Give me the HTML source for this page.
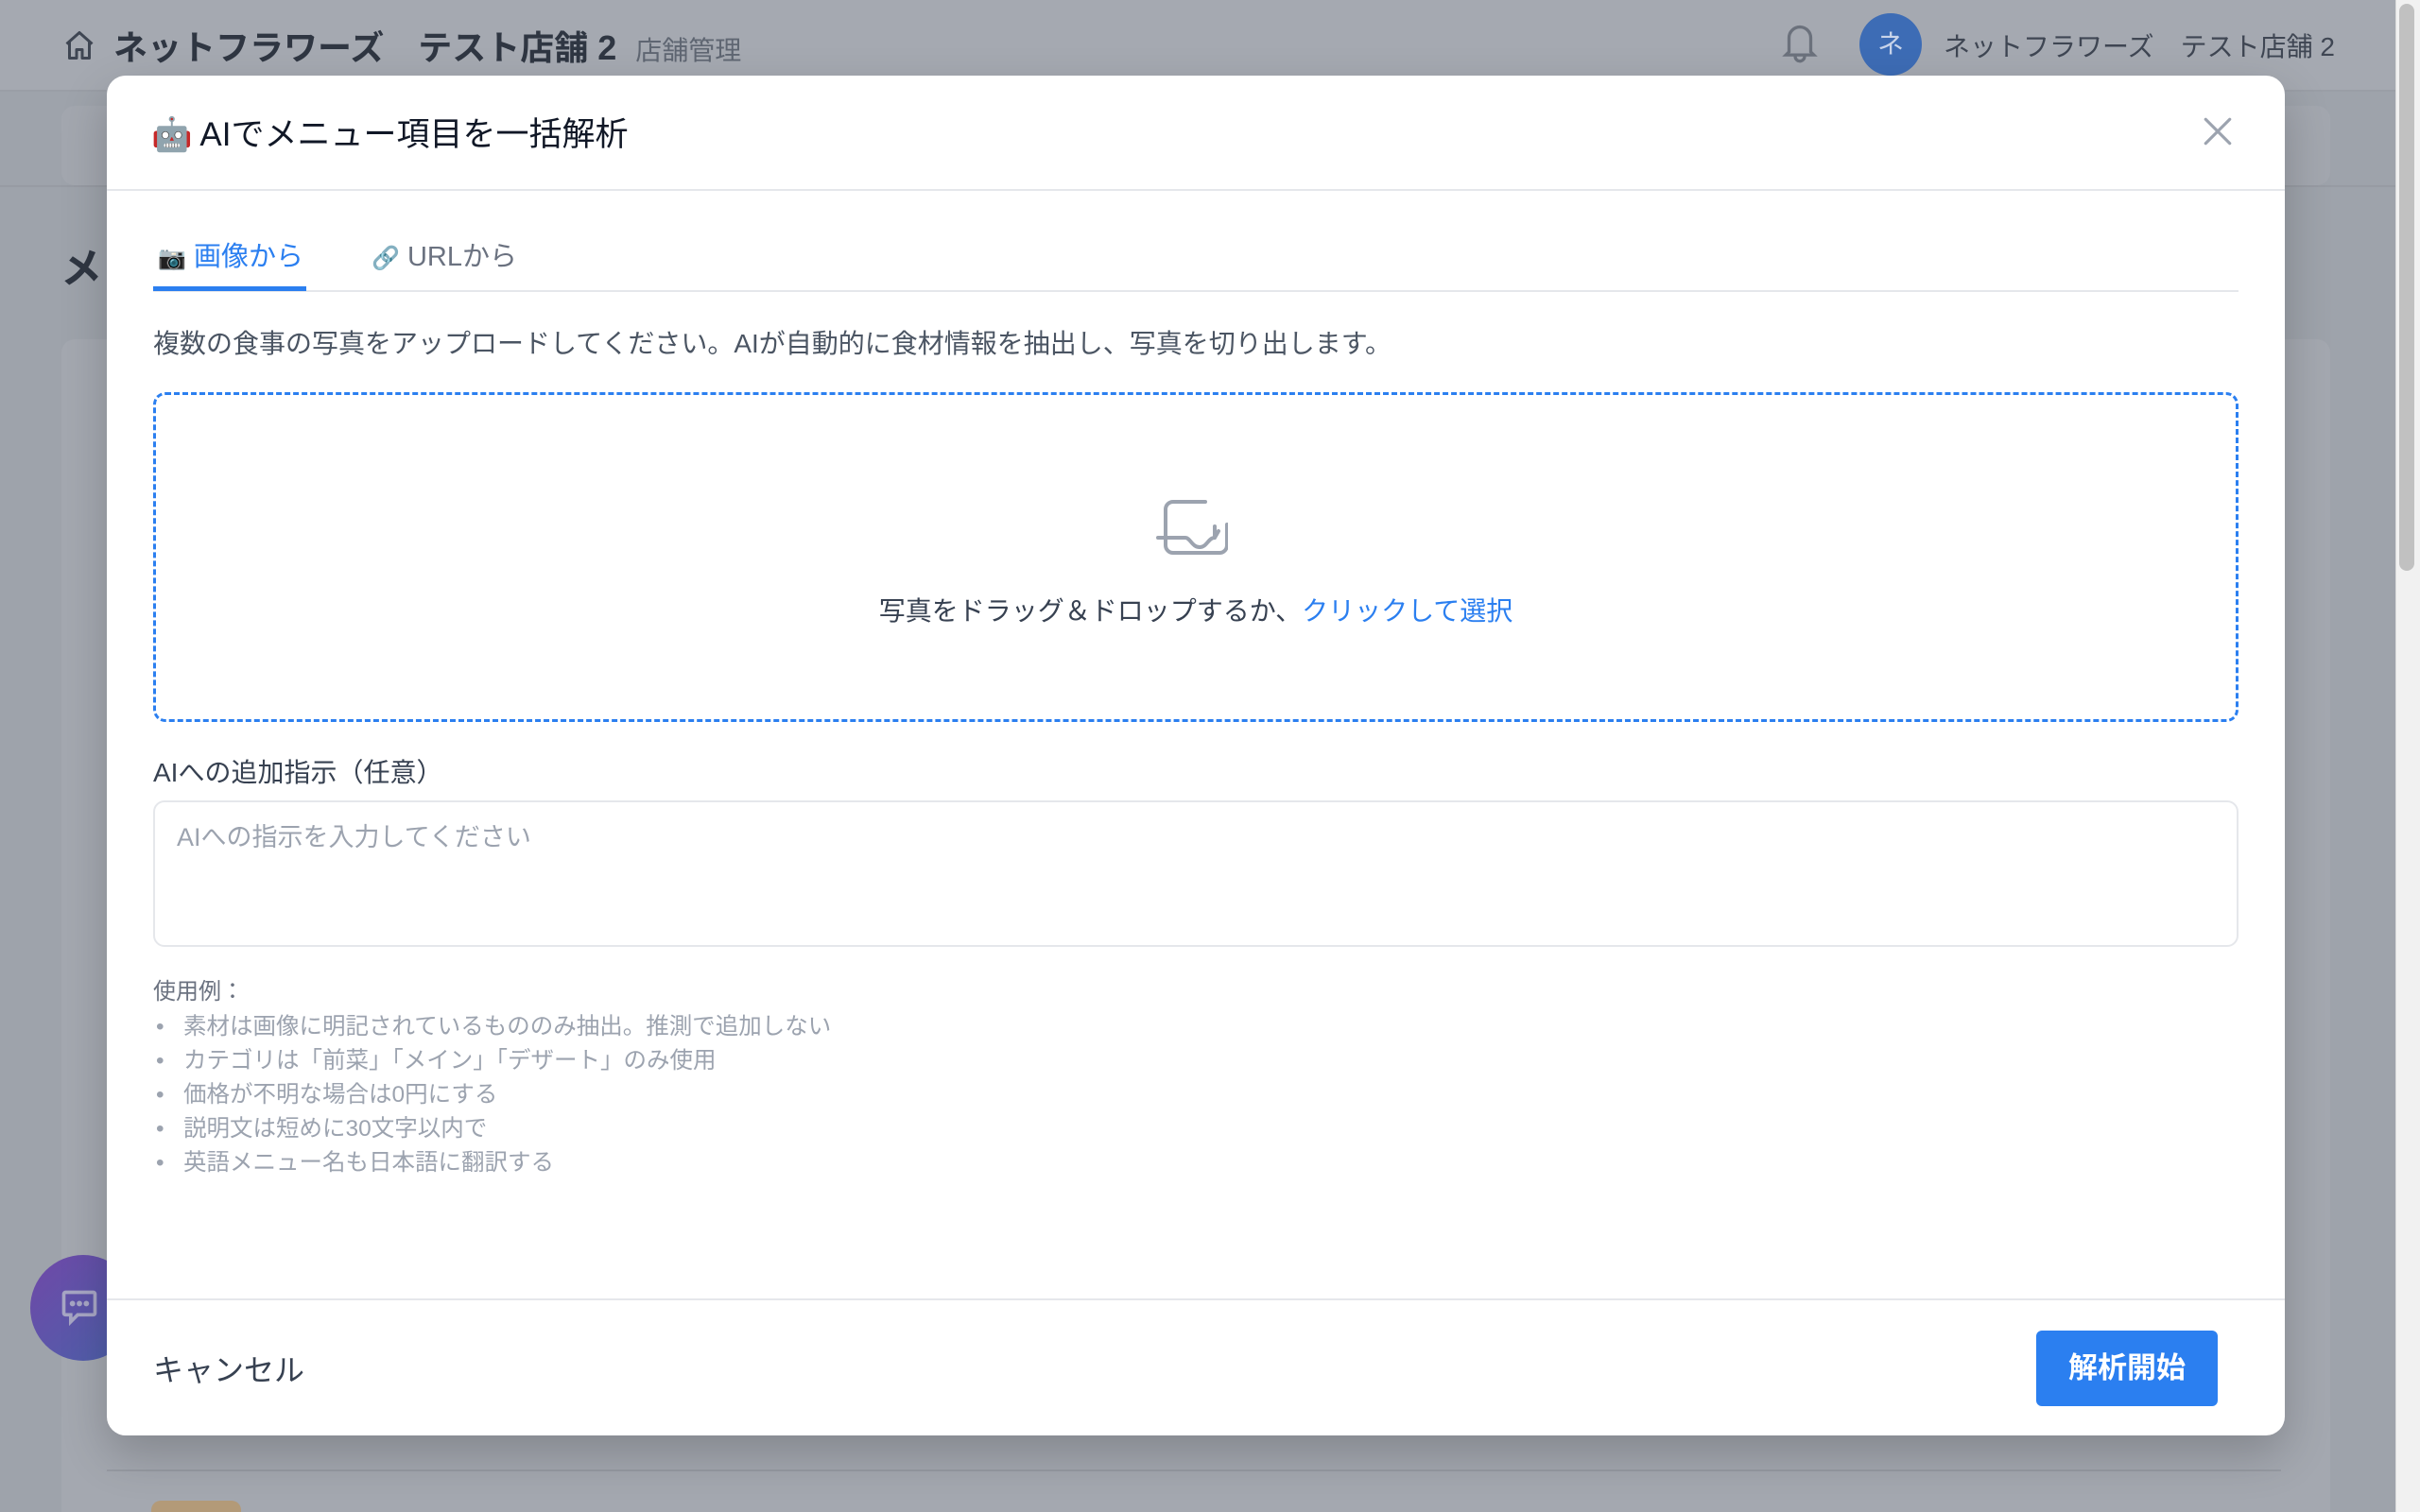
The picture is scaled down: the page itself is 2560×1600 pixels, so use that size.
<!DOCTYPE html>
<html style="overflow:hidden;width:2560px;height:1600px"><head><meta charset="utf-8"><style>
*{box-sizing:border-box;margin:0;padding:0}
body{width:2560px;height:1600px;overflow:hidden;background:#9ea3ab;font-family:"Liberation Sans","Noto Sans CJK JP",sans-serif;position:relative;color:#374151}
.abs{position:absolute}
</style></head><body>
<div class="abs" style="left:0;top:0;width:2534px;height:97px;background:#a5a9b1;border-bottom:2px solid #9a9ea6"></div>
<svg class="abs" style="left:66px;top:30px" width="36" height="36" viewBox="0 0 24 24" fill="none" stroke="#3f4653" stroke-width="2" stroke-linejoin="round"><path d="M3 11L12 3l9 8M5 9v12h5v-6h4v6h5V9"/></svg>
<div class="abs" style="left:120px;top:22px;font-size:36px;font-weight:bold;color:#2f3642;white-space:nowrap">ネットフラワーズ　テスト店舗 2 &nbsp;<span style="font-size:28px;font-weight:normal;color:#5f6672">店舗管理</span></div>
<svg class="abs" style="left:1884px;top:22px" width="40" height="46" viewBox="0 0 24 28" fill="none" stroke="#6b717c" stroke-width="2"><path d="M5 20V11a7 7 0 0 1 14 0v9l2 2H3z M9 23a3 3 0 0 0 6 0"/></svg>
<div class="abs" style="left:1967px;top:14px;width:66px;height:66px;border-radius:50%;background:#3d6cb5;color:#c8d4ea;font-size:28px;text-align:center;line-height:66px">ネ</div>
<div class="abs" style="left:2056px;top:28px;font-size:28px;color:#3f4653;white-space:nowrap">ネットフラワーズ　テスト店舗 2</div>
<div class="abs" style="left:65px;top:112px;width:2400px;height:84px;background:#a3a7af;border-radius:14px"></div>
<div class="abs" style="left:0;top:196px;width:2534px;height:2px;background:#979ba3"></div>
<div class="abs" style="left:64px;top:248px;font-size:44px;font-weight:bold;color:#2f3642">メ</div>
<div class="abs" style="left:65px;top:359px;width:2400px;height:1241px;background:#a4a8b0;border-radius:14px 14px 0 0"></div>
<div class="abs" style="left:113px;top:1555px;width:2300px;height:2px;background:#979ba3"></div>
<div class="abs" style="left:160px;top:1588px;width:95px;height:12px;background:#b39a78;border-radius:10px 10px 0 0"></div>
<div class="abs" style="left:32px;top:1328px;width:112px;height:112px;border-radius:50%;background:linear-gradient(135deg,#7048a8,#4a62aa)"></div>
<svg class="abs" style="left:62px;top:1362px" width="44" height="44" viewBox="0 0 24 24" fill="none" stroke="#a7a6c4" stroke-width="2"><path d="M4 3h16a1 1 0 0 1 1 1v11a1 1 0 0 1-1 1h-9l-4 4v-4H4a1 1 0 0 1-1-1V4a1 1 0 0 1 1-1z"/><circle cx="8" cy="9.5" r=".6" fill="#a7a6c4"/><circle cx="12" cy="9.5" r=".6" fill="#a7a6c4"/><circle cx="16" cy="9.5" r=".6" fill="#a7a6c4"/></svg>
<div class="abs" style="left:2534px;top:0;width:26px;height:1600px;background:#f1f1f1;border-left:1px solid #dcdcdc"></div>
<div class="abs" style="left:2538px;top:4px;width:16px;height:600px;background:#c1c1c1;border-radius:8px"></div>
<div class="abs" style="left:113px;top:80px;width:2304px;height:1439px;background:#fff;border-radius:20px;box-shadow:0 20px 50px rgba(0,0,0,.2)">
  <div class="abs" style="left:47px;top:34px;font-size:35px;color:#111827;white-space:nowrap">🤖 AIでメニュー項目を一括解析</div>
  <svg class="abs" style="left:2216px;top:42px" width="34" height="34" viewBox="0 0 24 24" stroke="#9ca3af" stroke-width="2.2" stroke-linecap="round"><path d="M3 3l18 18M21 3L3 21"/></svg>
  <div class="abs" style="left:0;top:120px;width:2304px;height:2px;background:#e5e7eb"></div>
  <div class="abs" style="left:49px;top:227px;width:2206px;height:2px;background:#e5e7eb"></div>
  <div class="abs" style="left:49px;top:223px;width:162px;height:5px;background:#2b7ff0"></div>
  <div class="abs" style="left:54px;top:168px;font-size:29px;color:#2b7ff0;white-space:nowrap"><span style="font-size:24px">📷</span> 画像から</div>
  <div class="abs" style="left:280px;top:168px;font-size:29px;color:#6b7280;white-space:nowrap"><span style="font-size:24px">🔗</span> URLから</div>
  <div class="abs" style="left:49px;top:262px;font-size:28px;color:#4b5563;white-space:nowrap">複数の食事の写真をアップロードしてください。AIが自動的に食材情報を抽出し、写真を切り出します。</div>
  <div class="abs" style="left:49px;top:335px;width:2206px;height:349px;border:3px dashed #2b7ff0;border-radius:13px"></div>
  <svg class="abs" style="left:1110px;top:446px" width="76" height="62" viewBox="0 0 76 62" fill="none" stroke="#9ca3af" stroke-width="4" stroke-linecap="round" stroke-linejoin="round"><path d="M52 5H18a8 8 0 0 0-8 8v38a8 8 0 0 0 8 8h49a8 8 0 0 0 8-8V29M2 43h29c5 0 7 10 15 10s9-10 16-10M62 31v12M66 36l-4 7"/></svg>
  <div class="abs" style="left:0;top:545px;width:2304px;text-align:center;font-size:28px;color:#374151">写真をドラッグ＆ドロップするか、<span style="color:#2b7ff0">クリックして選択</span></div>
  <div class="abs" style="left:49px;top:716px;font-size:28px;color:#374151;white-space:nowrap">AIへの追加指示（任意）</div>
  <div class="abs" style="left:49px;top:767px;width:2206px;height:155px;border:2px solid #e5e7eb;border-radius:12px"></div>
  <div class="abs" style="left:74px;top:784px;font-size:27px;color:#9ca3af;white-space:nowrap">AIへの指示を入力してください</div>
  <div class="abs" style="left:49px;top:949px;font-size:24px;color:#6b7280">使用例：</div>
  <div class="abs" style="left:52px;top:989px;font-size:24.5px;color:#9ca3af;line-height:36px;white-space:nowrap">
    <div>•&nbsp;&nbsp;&nbsp;素材は画像に明記されているもののみ抽出。推測で追加しない</div>
    <div>•&nbsp;&nbsp;&nbsp;カテゴリは「前菜」「メイン」「デザート」のみ使用</div>
    <div>•&nbsp;&nbsp;&nbsp;価格が不明な場合は0円にする</div>
    <div>•&nbsp;&nbsp;&nbsp;説明文は短めに30文字以内で</div>
    <div>•&nbsp;&nbsp;&nbsp;英語メニュー名も日本語に翻訳する</div>
  </div>
  <div class="abs" style="left:0;top:1294px;width:2304px;height:2px;background:#e5e7eb"></div>
  <div class="abs" style="left:49px;top:1345px;font-size:32px;color:#374151">キャンセル</div>
  <div class="abs" style="left:2041px;top:1328px;width:192px;height:80px;background:#2b7ff0;border-radius:6px;color:#fff;font-size:31px;font-weight:bold;text-align:center;line-height:80px">解析開始</div>
</div>
</body></html>
